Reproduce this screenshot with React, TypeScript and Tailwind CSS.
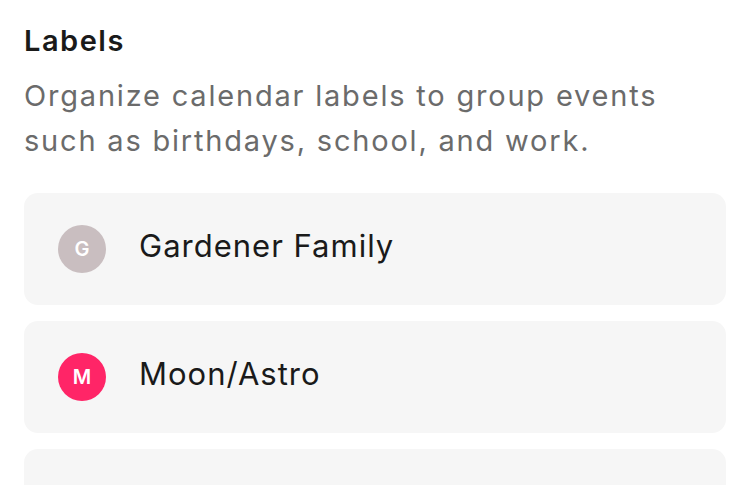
import React from 'react';

const labels = [
  { name: 'Gardener Family', initial: 'G', color: 'bg-[#c9bec0]' },
  { name: 'Moon/Astro', initial: 'M', color: 'bg-[#ff2567]' },
];

export default function App() {
  return (
    <div
      className="w-[750px] h-[485px] overflow-hidden bg-white px-6 pt-[23px]"
      style={{ fontFamily: 'Inter, "Open Sans", sans-serif' }}
    >
      <h1 className="text-[29px] leading-[36px] font-semibold tracking-[1.5px] text-[#1a1a1a]">
        Labels
      </h1>
      <p className="text-[29px] leading-[45px] tracking-[1.8px] text-[#6b6b6b] mt-[14px]">
        Organize calendar labels to group events such as birthdays, school, and work.
      </p>

      <div className="mt-[30px] flex flex-col gap-4">
        {labels.map((label) => (
          <div
            key={label.name}
            className="h-[112px] shrink-0 rounded-[14px] bg-[#f6f6f6] flex items-center pl-[34px] gap-[33px]"
          >
            <div
              className={`w-12 h-12 rounded-full ${label.color} flex items-center justify-center text-white text-[20px] font-semibold`}
            >
              {label.initial}
            </div>
            <span className="text-[31px] tracking-[1px] text-[#1a1a1a] mb-[5px]">{label.name}</span>
          </div>
        ))}
        {/* next label row, scrolled below the fold */}
        <div className="h-[112px] shrink-0 rounded-[14px] bg-[#f6f6f6]" />
      </div>
    </div>
  );
}
